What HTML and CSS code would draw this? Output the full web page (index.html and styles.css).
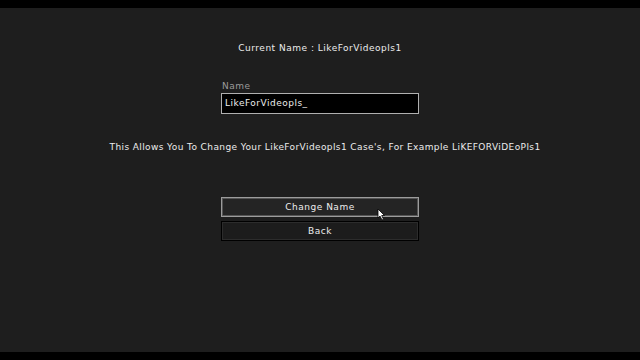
FILE: index.html
```html
<!DOCTYPE html>
<html lang="en">
<head>
    <meta charset="UTF-8">
    <title>Change Name</title>
    <link rel="stylesheet" href="styles.css">
</head>
<body>
    <div class="bar"></div>
    <div class="screen">
        <div class="current">Current Name : LikeForVideopls1</div>
        <div class="field">
            <label for="Name">Name</label>
            <div class="input" id="Name">LikeForVideopls_</div>
        </div>
        <div class="info">This Allows You To Change Your LikeForVideopls1 Case's, For Example LiKEFORViDEoPls1</div>
        <div class="buttons">
            <button type="button" class="btn hover">Change Name</button>
            <button type="button" class="btn">Back</button>
            <svg class="cursor" width="9" height="13" viewBox="0 0 9 13">
                <path d="M1 1 L1 10 L3 8 L5 12 L6.5 11.3 L4.7 7.5 L7.5 7.5 Z" fill="#fff" stroke="#000" stroke-width="0.8"/>
            </svg>
        </div>
    </div>
    <div class="bar"></div>
</body>
</html>
```

FILE: styles.css
```css
html, body {
    margin: 0;
    height: 100%;
    background-color: #000;
}
body {
    display: flex;
    flex-direction: column;
    font-family: "DejaVu Sans", sans-serif;
    font-size: 9px;
    letter-spacing: 0.5px;
    color: #ececec;
}
.bar {
    height: 8px;
    background-color: #000;
}
.screen {
    flex: 1;
    background-color: #1e1e1e;
    display: flex;
    flex-direction: column;
    align-items: center;
}
.current {
    margin-top: 34px;
    height: 12px;
    line-height: 12px;
}
.field {
    margin-top: 27px;
    width: 198px;
}
.field label {
    display: block;
    color: #9a9a9a;
    height: 10px;
    line-height: 10px;
    margin-left: 1px;
}
.input {
    margin-top: 2px;
    height: 19px;
    line-height: 19px;
    border: 1px solid #b0b0b0;
    background-color: #000;
    padding-left: 3px;
    color: #ececec;
}
.info {
    margin-top: 27px;
    padding-left: 10px;
    letter-spacing: 0.4px;
    height: 12px;
    line-height: 12px;
    white-space: nowrap;
}
.buttons {
    position: relative;
    margin-top: 44px;
    width: 198px;
    display: flex;
    flex-direction: column;
    gap: 4px;
}
.btn {
    height: 20px;
    border: 1px solid #000;
    background-color: #1c1c1c;
    color: #ececec;
    font-family: "DejaVu Sans", sans-serif;
    font-size: 9px;
    letter-spacing: 0.5px;
    padding: 0;
    box-shadow: inset 0 0 0 1px #2c2c2c;
}
.btn.hover {
    border-color: #9c9c9c;
    background-color: #242424;
    box-shadow: inset 0 0 0 1px #555;
}
.cursor {
    position: absolute;
    left: 156px;
    top: 11px;
}
```
